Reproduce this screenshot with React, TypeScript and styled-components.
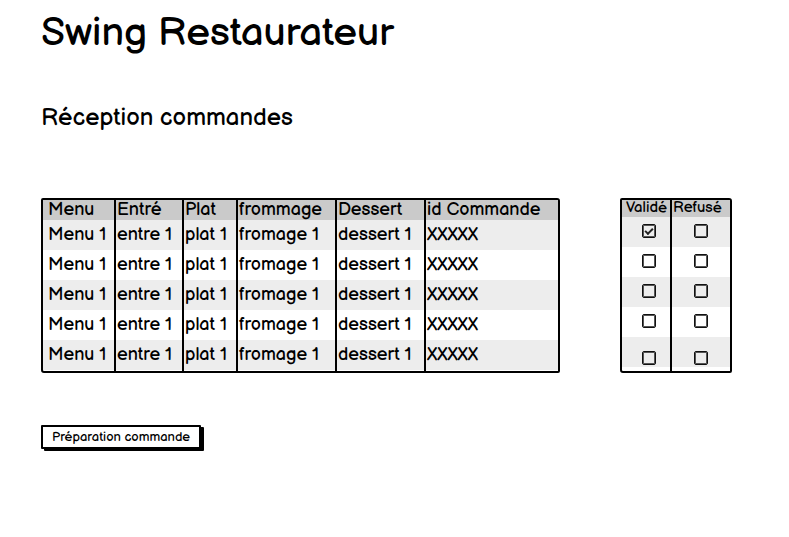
import React from 'react';
import styled, { createGlobalStyle } from 'styled-components';

const GlobalStyle = createGlobalStyle`
  *, *::before, *::after { box-sizing: border-box; }
  body {
    margin: 0;
    background: #fff;
    color: #000;
    font-family: 'Balsamiq Sans', Lato, 'Open Sans', sans-serif;
  }
`;

const Page = styled.main`
  padding: 9px 57px 40px 41px;
`;

const Title = styled.h1`
  margin: 0;
  font-size: 40px;
  line-height: 48px;
  font-weight: 400;
`;

const Subtitle = styled.h2`
  margin: 46px 0 0;
  font-size: 24px;
  line-height: 30px;
  font-weight: 400;
`;

const Boards = styled.div`
  display: flex;
  align-items: stretch;
  gap: 60px;
  margin-top: 65px;
`;

const Frame = styled.section<{ $width?: string }>`
  flex: ${(p) => (p.$width ? `0 0 ${p.$width}` : '1 1 0')};
  min-width: 0;
  border: 2px solid #000;
  border-radius: 2px 3px 2px 3px;
`;

const Table = styled.table`
  width: 100%;
  height: 100%;
  table-layout: fixed;
  border-collapse: separate;
  border-spacing: 0;
  tbody tr:nth-child(odd) { background: #ededed; }
`;

const Column = styled.col<{ $width?: number }>`
  width: ${(p) => (p.$width ? `${p.$width}px` : 'auto')};
`;

const HeadCell = styled.th<{ $small?: boolean }>`
  height: ${(p) => (p.$small ? 17 : 20)}px;
  padding: 0 0 0 1px;
  background: #cacaca;
  border-right: 2px solid #000;
  font-size: ${(p) => (p.$small ? 15 : 18)}px;
  line-height: ${(p) => (p.$small ? 16 : 18)}px;
  font-weight: 400;
  text-align: left;
  white-space: nowrap;
  vertical-align: ${(p) => (p.$small ? 'top' : 'middle')};
  &:first-child { padding-left: ${(p) => (p.$small ? 4 : 5)}px; }
  &:last-child { border-right: 0; }
`;

const Cell = styled.td`
  height: 30px;
  padding: 0 0 0 1px;
  border-right: 2px solid #000;
  font-size: 18px;
  line-height: 24px;
  white-space: nowrap;
  &:first-child { padding-left: 5px; }
  &:last-child { border-right: 0; }
`;

const CheckCell = styled.td`
  height: 30px;
  padding: 0 0 2px 6px;
  border-right: 2px solid #000;
  text-align: center;
  vertical-align: middle;
  line-height: 0;
  &:last-child { padding-left: 0; border-right: 0; }
  tr:last-child > & { vertical-align: bottom; }
`;

const FootCell = styled.td<{ $height: number }>`
  height: ${(p) => p.$height}px;
  padding: 0;
  border-right: 2px solid #000;
  &:last-child { border-right: 0; }
`;

const Check = styled.input`
  appearance: none;
  display: inline-grid;
  width: 14px;
  height: 14px;
  margin: 0;
  place-content: center;
  border: 1px solid #111;
  border-radius: 2px;
  box-shadow: inset 0 0 0 1px #555;
  background: transparent;
  &:checked::before {
    content: '';
    width: 8px;
    height: 5px;
    margin-bottom: 2px;
    border-left: 2px solid #222;
    border-bottom: 2px solid #222;
    transform: rotate(-45deg);
  }
`;

const Action = styled.button`
  display: block;
  height: 24px;
  margin-top: 52px;
  padding: 0 9px;
  border: 2px solid #000;
  border-radius: 1px;
  background: #fff;
  box-shadow: 3px 2px 0 #000;
  color: #000;
  font-family: inherit;
  font-size: 13px;
  line-height: 18px;
  white-space: nowrap;
`;

const columns = [
  { label: 'Menu', width: 73 },
  { label: 'Entré', width: 68 },
  { label: 'Plat', width: 54 },
  { label: 'frommage', width: 99 },
  { label: 'Dessert', width: 89 },
  { label: 'id Commande' },
];

const order = ['Menu 1', 'entre 1', 'plat 1', 'fromage 1', 'dessert 1', 'XXXXX'];
const orders = Array.from({ length: 5 }, () => order);

export default function App() {
  return (
    <>
      <GlobalStyle />
      <Page>
        <Title>Swing Restaurateur</Title>
        <Subtitle>Réception commandes</Subtitle>
        <Boards>
          <Frame>
            <Table>
              <colgroup>
                {columns.map((c) => <Column key={c.label} $width={c.width} />)}
              </colgroup>
              <thead>
                <tr>
                  {columns.map((c) => <HeadCell key={c.label} scope="col">{c.label}</HeadCell>)}
                </tr>
              </thead>
              <tbody>
                {orders.map((row, i) => (
                  <tr key={i}>
                    {row.map((text) => <Cell key={text}>{text}</Cell>)}
                  </tr>
                ))}
              </tbody>
              <tfoot>
                <tr>{columns.map((c) => <FootCell key={c.label} $height={1} />)}</tr>
              </tfoot>
            </Table>
          </Frame>
          <Frame $width="112px">
            <Table>
              <colgroup>
                <Column $width={50} />
                <Column />
              </colgroup>
              <thead>
                <tr>
                  <HeadCell $small scope="col" id="valid">Validé</HeadCell>
                  <HeadCell $small scope="col" id="refused">Refusé</HeadCell>
                </tr>
              </thead>
              <tbody>
                {orders.map((_, i) => (
                  <tr key={i}>
                    <CheckCell>
                      <Check type="checkbox" aria-labelledby="valid" defaultChecked={i === 0} />
                    </CheckCell>
                    <CheckCell>
                      <Check type="checkbox" aria-labelledby="refused" />
                    </CheckCell>
                  </tr>
                ))}
              </tbody>
              <tfoot>
                <tr>
                  <FootCell $height={4} />
                  <FootCell $height={4} />
                </tr>
              </tfoot>
            </Table>
          </Frame>
        </Boards>
        <Action type="button">Préparation commande</Action>
      </Page>
    </>
  );
}
